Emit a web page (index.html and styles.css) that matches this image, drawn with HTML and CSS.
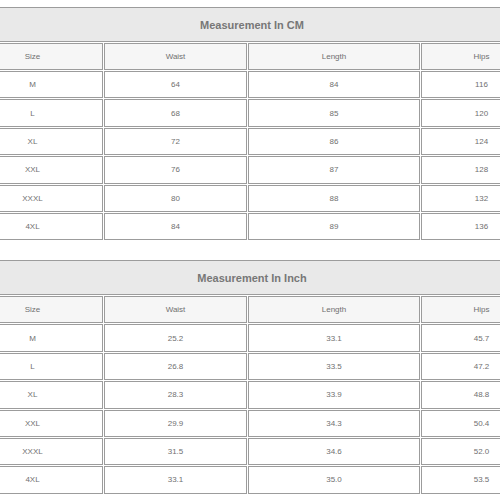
FILE: index.html
```html
<!DOCTYPE html>
<html>
<head>
<meta charset="utf-8">
<link rel="stylesheet" href="styles.css">
</head>
<body>
<div class="page">
  <table class="size-table">
    <tr><th class="title" colspan="4">Measurement In CM</th></tr>
    <tr class="head"><td class="c1">Size</td><td class="c2">Waist</td><td class="c3">Length</td><td class="c4">Hips</td></tr>
    <tr><td>M</td><td>64</td><td>84</td><td>116</td></tr>
    <tr><td>L</td><td>68</td><td>85</td><td>120</td></tr>
    <tr><td>XL</td><td>72</td><td>86</td><td>124</td></tr>
    <tr><td>XXL</td><td>76</td><td>87</td><td>128</td></tr>
    <tr><td>XXXL</td><td>80</td><td>88</td><td>132</td></tr>
    <tr><td>4XL</td><td>84</td><td>89</td><td>136</td></tr>
  </table>
  <table class="size-table second">
    <tr><th class="title" colspan="4">Measurement In Inch</th></tr>
    <tr class="head"><td class="c1">Size</td><td class="c2">Waist</td><td class="c3">Length</td><td class="c4">Hips</td></tr>
    <tr><td>M</td><td>25.2</td><td>33.1</td><td>45.7</td></tr>
    <tr><td>L</td><td>26.8</td><td>33.5</td><td>47.2</td></tr>
    <tr><td>XL</td><td>28.3</td><td>33.9</td><td>48.8</td></tr>
    <tr><td>XXL</td><td>29.9</td><td>34.3</td><td>50.4</td></tr>
    <tr><td>XXXL</td><td>31.5</td><td>34.6</td><td>52.0</td></tr>
    <tr><td>4XL</td><td>33.1</td><td>35.0</td><td>53.5</td></tr>
  </table>
</div>
</body>
</html>
```
FILE: styles.css
```css
html, body {
  margin: 0;
  padding: 0;
  background: #ffffff;
  overflow: hidden;
}
.page {
  padding-top: 6px;
  width: 500px;
  overflow: hidden;
}
.size-table {
  width: 582px;
  margin-left: -39px;
  border-collapse: separate;
  border-spacing: 1px;
  font-family: "Liberation Sans", Arial, sans-serif;
  background: #ffffff;
}
.size-table.second {
  margin-top: 18px;
}
.size-table th,
.size-table td {
  border: 1px solid #9c9c9c;
  padding: 0;
  text-align: center;
  vertical-align: middle;
}
.size-table .title {
  height: 33px;
  background: #e9e9e9;
  color: #777777;
  font-size: 11px;
  font-weight: bold;
}
.size-table td {
  height: 25.4px;
  font-size: 8px;
  color: #707070;
}
.size-table .head td {
  height: 25px;
  background: #f6f6f6;
}
.c1 { width: 139px; }
.c2 { width: 141px; }
.c3 { width: 170px; }
.c4 { width: 119px; }
```
